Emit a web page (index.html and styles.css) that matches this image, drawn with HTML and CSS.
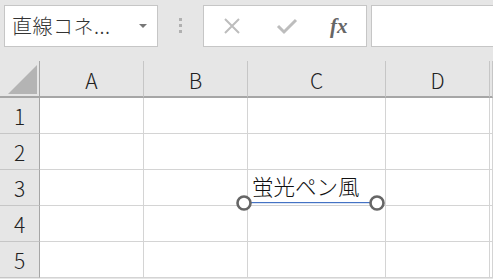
FILE: index.html
```html
<!DOCTYPE html>
<html lang="ja">
<head>
  <meta charset="UTF-8" />
  <title>Sheet</title>
  <link rel="stylesheet" href="styles.css">
</head>
<body>
  <div class="toolbar">
    <div class="namebox">
      <span class="name">直線コネ...</span>
      <span class="caret"></span>
    </div>
    <div class="grip"><i></i><i></i><i></i></div>
    <div class="fxbox">
      <svg class="icon" viewBox="0 0 20 20" width="20" height="20">
        <path d="M3 3 L17 17 M17 3 L3 17" stroke="#bdbdbd" stroke-width="2" fill="none"/>
      </svg>
      <svg class="icon" viewBox="0 0 22 20" width="22" height="20">
        <path d="M2 10 L8 16 L20 4" stroke="#bdbdbd" stroke-width="3" fill="none"/>
      </svg>
      <span class="fx">fx</span>
    </div>
    <div class="formula"></div>
  </div>

  <div class="sheet">
    <div class="corner"><span class="tri"></span></div>
    <div class="colhead">A</div>
    <div class="colhead">B</div>
    <div class="colhead">C</div>
    <div class="colhead">D</div>
    <div class="colhead"></div>

    <div class="rowhead">1</div><div class="cell"></div><div class="cell"></div><div class="cell"></div><div class="cell"></div><div class="cell"></div>
    <div class="rowhead">2</div><div class="cell"></div><div class="cell"></div><div class="cell"></div><div class="cell"></div><div class="cell"></div>
    <div class="rowhead">3</div><div class="cell"></div><div class="cell"></div><div class="cell"></div><div class="cell"></div><div class="cell"></div>
    <div class="rowhead">4</div><div class="cell"></div><div class="cell"></div><div class="cell"></div><div class="cell"></div><div class="cell"></div>
    <div class="rowhead">5</div><div class="cell"></div><div class="cell"></div><div class="cell"></div><div class="cell"></div><div class="cell"></div>

    <!-- connector shape drawn over the grid -->
    <span class="label">蛍光ペン風</span>
    <svg class="connector" width="152" height="20" viewBox="0 0 152 20">
      <line x1="10" y1="10" x2="143" y2="10" stroke="#b4c7e7" stroke-width="1"/>
      <line x1="10" y1="9.5" x2="143" y2="9.5" stroke="#4472c4" stroke-width="1.2"/>
      <circle cx="10" cy="10" r="6.5" fill="#fff" stroke="#666" stroke-width="2.6"/>
      <circle cx="143" cy="10" r="6.5" fill="#fff" stroke="#666" stroke-width="2.6"/>
    </svg>
  </div>
</body>
</html>
```

FILE: styles.css
```css
* {
  box-sizing: border-box;
  margin: 0;
  padding: 0;
}
body {
  background: #e6e6e6;
  font-family: 'Noto Sans CJK JP', 'Noto Sans', sans-serif;
  font-weight: 300;
  color: #222;
  overflow: hidden;
}

.toolbar {
  display: flex;
  align-items: flex-start;
  height: 61px;
  padding: 5px 0 0 4px;
}
.namebox {
  width: 154px;
  height: 42px;
  background: #fff;
  border: 1px solid #c6c6c6;
  display: flex;
  align-items: center;
  padding-left: 7px;
  position: relative;
}
.name {
  font-size: 20px;
  color: #333;
  line-height: 1;
  letter-spacing: 0.5px;
}
.caret {
  position: absolute;
  right: 10px;
  top: 18px;
  border-left: 4px solid transparent;
  border-right: 4px solid transparent;
  border-top: 4px solid #777;
}
.grip {
  width: 45px;
  display: flex;
  flex-direction: column;
  align-items: center;
  gap: 3px;
  padding-top: 13px;
}
.grip i {
  width: 3px;
  height: 3px;
  background: #b0b0b0;
}
.fxbox {
  width: 164px;
  height: 42px;
  background: #fff;
  border: 1px solid #c6c6c6;
  display: flex;
  align-items: center;
  padding-left: 18px;
  gap: 34px;
}
.fx {
  font-family: 'Liberation Serif', serif;
  font-style: italic;
  font-weight: bold;
  font-size: 21px;
  color: #666;
  margin-left: -2px;
}
.formula {
  flex: 1;
  height: 42px;
  margin-left: 4px;
  background: #fff;
  border: 1px solid #c6c6c6;
  border-right: none;
}

.sheet {
  position: relative;
  display: grid;
  grid-template-columns: 40px 104px 104px 138px 104px 1fr;
  grid-template-rows: 37px repeat(5, 36px);
  background: #fff;
}
.corner {
  background: #e6e6e6;
  border-right: 1px solid #a6a6a6;
  border-bottom: 2px solid #a6a6a6;
  position: relative;
}
.tri {
  position: absolute;
  left: 8px;
  top: 4px;
  width: 29px;
  height: 29px;
  background: #b4b4b4;
  clip-path: polygon(100% 0, 100% 100%, 0 100%);
}
.colhead {
  background: #e6e6e6;
  border-right: 1px solid #c6c6c6;
  border-bottom: 2px solid #a6a6a6;
  display: flex;
  align-items: center;
  justify-content: center;
  font-size: 21px;
  padding-top: 2px;
}
.rowhead {
  background: #e6e6e6;
  border-right: 1px solid #a6a6a6;
  border-bottom: 1px solid #c6c6c6;
  display: flex;
  align-items: center;
  justify-content: center;
  font-size: 21px;
}
.cell {
  border-right: 1px solid #d4d4d4;
  border-bottom: 1px solid #d4d4d4;
}

.label {
  position: absolute;
  left: 252px;
  top: 114px;
  font-size: 21.5px;
  line-height: 1;
  color: #111;
  white-space: nowrap;
}
.connector {
  position: absolute;
  left: 234px;
  top: 132px;
}
```
